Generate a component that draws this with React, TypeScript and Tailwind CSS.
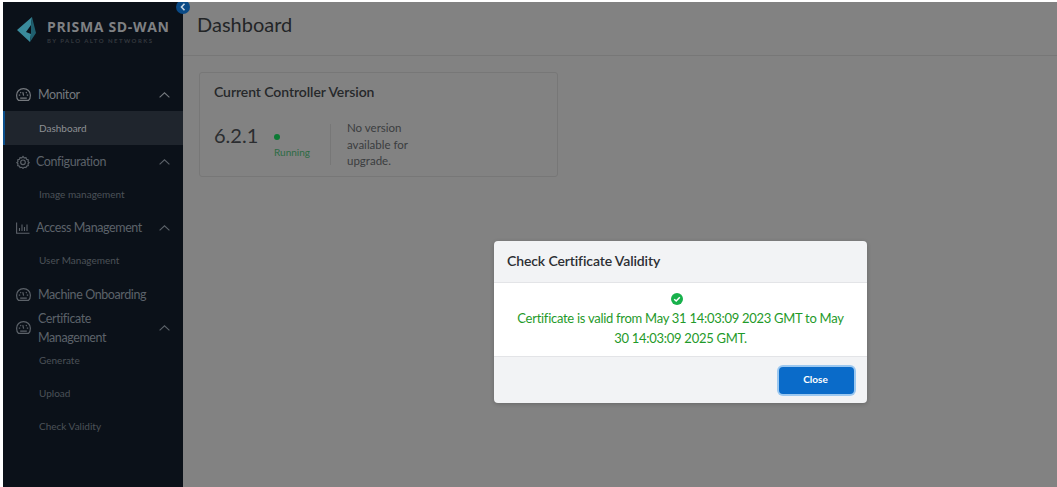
const font = "font-['Lato','Noto_Sans',sans-serif]";

function GaugeIcon() {
  return (
    <svg width="15" height="13" viewBox="0 0 15 13" fill="none" stroke="currentColor" strokeWidth="1.2" className="shrink-0">
      <path d="M2.4 12.3C1.1 11.2.6 9.4.6 7.2.6 3.4 3.6.7 7.5.7s6.9 2.7 6.9 6.5c0 2.2-.5 4-1.8 5.1z" />
      <path d="M7.6 7.6 6.8 4.2M2.8 7.2h1.4M10.8 7.2h1.4M4.3 4.2l.8.8M10.7 4.2l-.8.8M4.2 10.2h6.6" />
    </svg>
  );
}

function GearIcon() {
  return (
    <svg width="14" height="14" viewBox="0 0 24 24" fill="none" stroke="currentColor" strokeWidth="2" className="shrink-0">
      <path d="M12 2.5l2 2.4 3.1-.5 1 3 3 1-.5 3.1L22.5 13l-1.9 2 .5 3.1-3 1-1 2.4-3.1-.5-2 1.9-2-1.9-3.1.5-1-2.4-3-1 .5-3.1L1.5 13l1.9-1.5-.5-3.1 3-1 1-3 3.1.5z" />
      <circle cx="12" cy="12.5" r="4" />
    </svg>
  );
}

function BarsIcon() {
  return (
    <svg width="14" height="12" viewBox="0 0 14 12" fill="none" stroke="currentColor" strokeWidth="1.1" className="shrink-0">
      <path d="M.6.5v10.7h12.9M3.5 9V6M6 9V2.5M8.5 9V5M11 9V2.5" />
    </svg>
  );
}

function Chevron() {
  return (
    <svg width="11" height="6" viewBox="0 0 11 6" fill="none" stroke="currentColor" strokeWidth="1.1" className="shrink-0">
      <path d="M.6 5.4 5.5.8l4.9 4.6" />
    </svg>
  );
}

function NavGroup({ icon, label, chevron = true, tight = false }: { icon: React.ReactNode; label: React.ReactNode; chevron?: boolean; tight?: boolean }) {
  return (
    <div className={`flex h-[33px] items-center pl-[13px] pr-[13px] text-[12.5px] tracking-[-0.4px] text-[#5c6269] ${tight ? "gap-[6px]" : "gap-[7px]"}`}>
      {icon}
      <span className="min-w-0 flex-1 whitespace-nowrap leading-[19px]">{label}</span>
      {chevron && <Chevron />}
    </div>
  );
}

function SubItem({ label, active = false, tall = false }: { label: string; active?: boolean; tall?: boolean }) {
  return (
    <div
      className={`flex items-center text-[10px] ${tall ? "h-[34px] pb-[2px]" : active ? "h-[34px]" : "h-[33px]"} ${
        active ? "border-l-2 border-[#0a4f8c] bg-[#1f252d] pl-[34px] text-[#8d9094]" : "pl-[36px] text-[#4b5158]"
      }`}
    >
      {label}
    </div>
  );
}

export default function App() {
  return (
    <div className={`relative h-[487px] w-[1057px] overflow-hidden bg-white pl-[3px] pt-[2px] ${font}`}>
      <div className="flex h-[485px] w-[1054px] overflow-hidden">
        <aside className="relative w-[180px] shrink-0 bg-[#0b1119]">
          <div className="flex h-[51px] items-center gap-[11px] pl-[14px] pt-[4px]">
            <svg width="19" height="25" viewBox="0 0 19 25" className="shrink-0">
              <path d="M15 0 0 13l13 12 1-8-5-2 5-7z" fill="#3a8b9c" />
              <path d="M15 0l-1 8v9l-1 8 6-9z" fill="#1f5f6e" />
            </svg>
            <div className="flex flex-col pt-[4px]">
              <span className="font-['Open_Sans',sans-serif] text-[14px] font-bold leading-[15px] tracking-[0.65px] whitespace-nowrap text-[#7f8083]">PRISMA SD-WAN</span>
              <span className="mt-[3px] text-[6px] font-bold leading-[8px] tracking-[1.45px] whitespace-nowrap text-[#34383e]">BY PALO ALTO NETWORKS</span>
            </div>
          </div>
          <div className="mt-[25px]">
            <div className="flex h-[33px] items-center gap-[7px] pl-[13px] pr-[13px] text-[12.5px] tracking-[-0.4px] text-[#75797e]">
              <GaugeIcon />
              <span className="flex-1 pt-[2px]">Monitor</span>
              <Chevron />
            </div>
            <SubItem label="Dashboard" active />
            <NavGroup icon={<GearIcon />} label="Configuration" tight />
            <SubItem label="Image management" />
            <NavGroup icon={<BarsIcon />} label="Access Management" tight />
            <SubItem label="User Management" tall />
            <NavGroup icon={<GaugeIcon />} label="Machine Onboarding" chevron={false} />
            <NavGroup icon={<GaugeIcon />} label={<>Certificate<br />Management</>} />
            <SubItem label="Generate" />
            <SubItem label="Upload" />
            <SubItem label="Check Validity" />
          </div>
          <div className="absolute -top-[2px] -right-[7px] flex h-[14px] w-[14px] items-center justify-center rounded-full bg-[#0a4a86]">
            <svg width="6" height="8" viewBox="0 0 6 8" fill="none" stroke="#c5d4e2" strokeWidth="1.6">
              <path d="M4.5.8 1.5 4l3 3.2" />
            </svg>
          </div>
        </aside>
        <main className="min-w-0 flex-1 bg-[#828282]">
          <div className="flex h-[54px] items-center border-b border-[#777777] pb-[10px] pl-[14px]">
            <h1 className="text-[20px] font-normal text-[#232527]">Dashboard</h1>
          </div>
          <div className="ml-[16px] mt-[16px] h-[105px] w-[359px] rounded-[3px] border border-[#777777] px-[14px] pt-[10px]">
            <div className="text-[14px] font-semibold leading-[18px] tracking-[-0.08px] text-[#26282a]">Current Controller Version</div>
            <div className="mt-[18px] flex">
              <span className="mt-[4px] w-[60px] text-[20px] leading-[24px] text-[#2b2d30]">6.2.1</span>
              <div className="w-[56px] pt-[15px]">
                <div className="h-[6px] w-[6px] rounded-full bg-[#0c7a34]" />
                <div className="mt-[5px] text-[10px] leading-[14px] text-[#2c6b44]">Running</div>
              </div>
              <div className="h-[41px] w-px self-center bg-[#777777]" />
              <div className="ml-[16px] mt-[1px] w-[72px] text-[11.5px] leading-[16.5px] text-[#3b3d40]">No version available for upgrade.</div>
            </div>
          </div>
        </main>
      </div>

      {/* dialog */}
      <div className="absolute left-[494px] top-[241px] w-[373px] overflow-hidden rounded-[4px] bg-[#f2f3f5] shadow-[0_1px_4px_rgba(0,0,0,0.2)]">
        <div className="flex h-[42px] items-center border-b border-[#e3e4e7] pb-[3px] pl-[13px] text-[14px] font-semibold tracking-[-0.12px] text-[#2c2e33]">Check Certificate Validity</div>
        <div className="flex h-[73px] flex-col items-center bg-white px-[20px] pt-[10px] text-center text-[13px] leading-[20px] tracking-[-0.28px] text-[#1f9a2a]">
          <svg width="12" height="12" viewBox="0 0 12 12" className="mr-[8px] shrink-0">
            <circle cx="6" cy="6" r="6" fill="#17b14b" />
            <path d="M3.2 6.2 5.2 8l3.6-3.8" fill="none" stroke="#fff" strokeWidth="1.5" />
          </svg>
          <p className="mt-[3px]">Certificate is valid from May 31 14:03:09 2023 GMT to May 30 14:03:09 2025 GMT.</p>
        </div>
        <div className="flex h-[47px] items-center justify-end border-t border-[#e3e4e7] pr-[13px]">
          <button className="h-[27px] w-[75px] rounded-[4px] bg-[#0a6bc9] pb-[2px] pr-[2px] text-[10px] font-bold text-white shadow-[0_0_0_2px_#9cc8f0]">Close</button>
        </div>
      </div>
    </div>
  );
}
